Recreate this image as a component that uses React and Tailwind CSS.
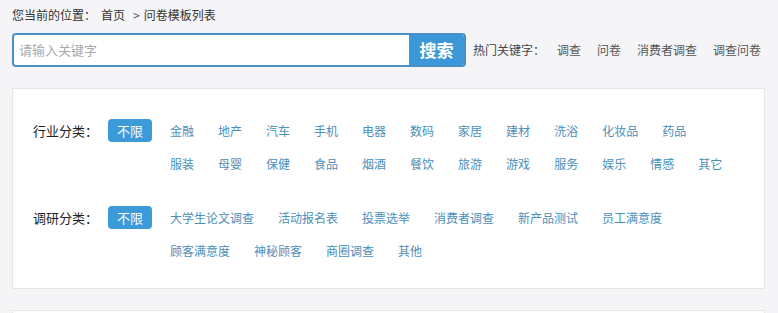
import React from "react";

const industry = ["金融","地产","汽车","手机","电器","数码","家居","建材","洗浴","化妆品","药品","服装","母婴","保健","食品","烟酒","餐饮","旅游","游戏","服务","娱乐","情感","其它"];
const research = ["大学生论文调查","活动报名表","投票选举","消费者调查","新产品测试","员工满意度","顾客满意度","神秘顾客","商圈调查","其他"];
const hot = ["调查","问卷","消费者调查","调查问卷"];

function Row({ label, items }) {
  return (
    <div className="flex items-start">
      <div className="w-[75px] h-[33px] flex items-center text-[13px] text-[#222] shrink-0">{label}</div>
      <div className="h-[33px] flex items-center shrink-0 mr-[18px]">
        <span className="w-[44px] h-[23px] rounded-[4px] bg-[#3d9ad8] text-white text-[13px] flex items-center justify-center">不限</span>
      </div>
      <div className="flex-1 flex flex-wrap gap-x-6 mr-[16px]">
        {items.map((t) => (
          <span key={t} className="h-[33px] leading-[33px] text-[12px] text-[#4a8fba] whitespace-nowrap">{t}</span>
        ))}
      </div>
    </div>
  );
}

export default function App() {
  return (
    <div className="h-[313px] bg-[#f5f5f7] px-[12px] pt-[6px] overflow-hidden" style={{ fontFamily: '"Noto Sans CJK SC", "Noto Sans", sans-serif' }}>
      <div className="h-[18px] flex items-center text-[12px] text-[#333]">
        <span>您当前的位置：</span>
        <span className="ml-[5px]">首页</span>
        <span className="ml-[8px] mr-[4px] text-[#555]">&gt;</span>
        <span>问卷模板列表</span>
      </div>
      <div className="mt-[9px] flex items-center">
        <div className="w-[454px] h-[34px] flex rounded-[4px] border-2 border-[#4a90c6] overflow-hidden bg-white">
          <div className="flex-1 flex items-center pl-[5px] text-[13px] text-[#aaa]">请输入关键字</div>
          <div className="w-[55px] bg-[#3b97d8] text-white text-[17px] font-bold flex items-center justify-center">搜索</div>
        </div>
        <div className="ml-[7px] flex items-center text-[12px] text-[#444]">
          <span className="mr-[12px]">热门关键字：</span>
          <div className="flex gap-x-4 text-[#555]">
            {hot.map((h) => (
              <span key={h}>{h}</span>
            ))}
          </div>
        </div>
      </div>
      <div className="mt-[21px] w-[753px] bg-white border border-[#e6e6e6] pl-[20px] pr-[20px] pt-[25px] pb-[21px] flex flex-col gap-[21px]">
        <Row label="行业分类：" items={industry} />
        <Row label="调研分类：" items={research} />
      </div>
      <div className="mt-[21px] w-[753px] h-[40px] bg-white border border-[#e6e6e6]"></div>
    </div>
  );
}
